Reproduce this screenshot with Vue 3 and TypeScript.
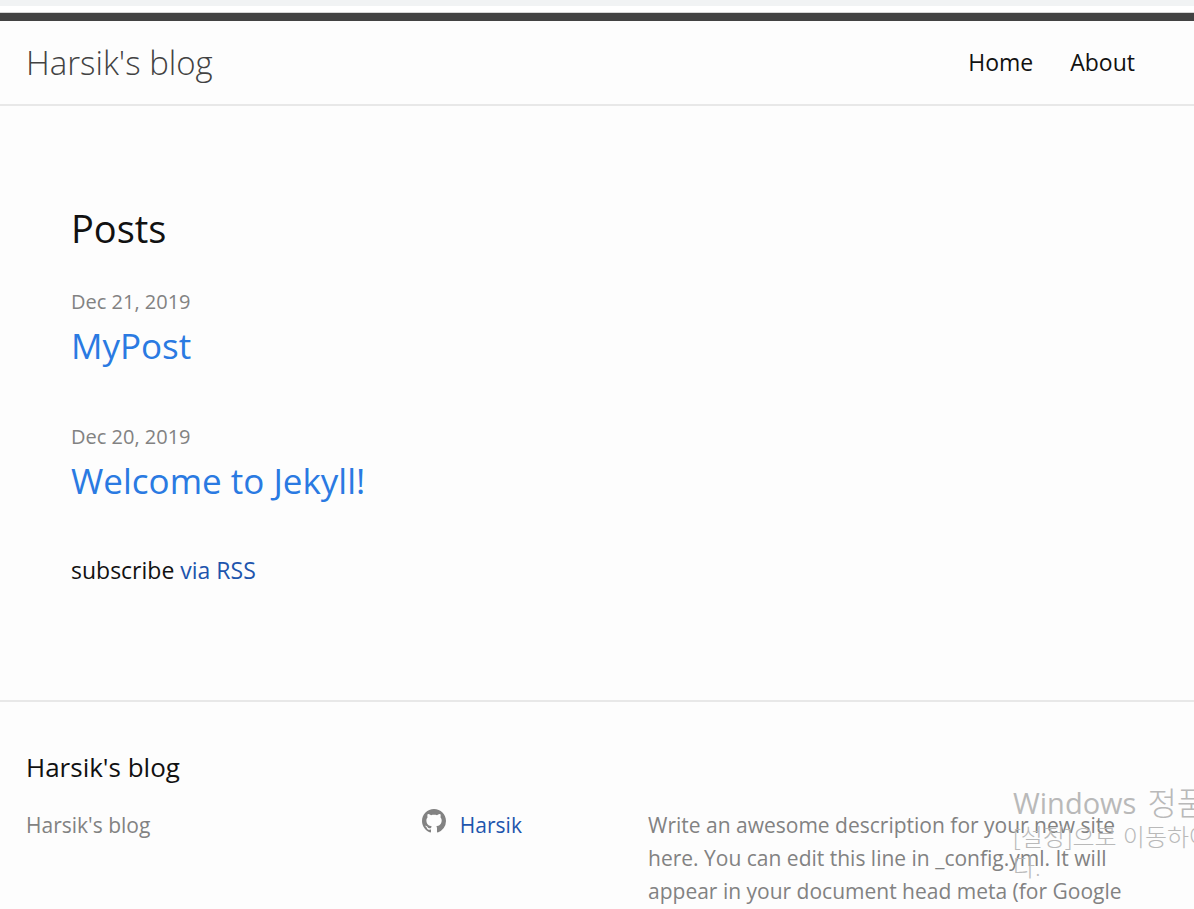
<script setup lang="ts">
interface Post {
  date: string
  iso: string
  title: string
}

const siteTitle = "Harsik's blog"
const navLinks: string[] = ['Home', 'About']
const posts: Post[] = [
  { date: 'Dec 21, 2019', iso: '2019-12-21', title: 'MyPost' },
  { date: 'Dec 20, 2019', iso: '2019-12-20', title: 'Welcome to Jekyll!' },
]
const description =
  'Write an awesome description for your new site here. You can edit this line in _config.yml. It will appear in your document head meta (for Google'
</script>

<template>
  <div class="page">
    <div class="browser-edge"></div>
    <header class="site-header">
      <a class="site-title" href="#">{{ siteTitle }}</a>
      <nav class="site-nav">
        <a v-for="link in navLinks" :key="link" href="#">{{ link }}</a>
      </nav>
    </header>

    <main class="content">
      <h1 class="heading">Posts</h1>
      <ul class="post-list">
        <li v-for="post in posts" :key="post.iso">
          <time class="post-date" :datetime="post.iso">{{ post.date }}</time>
          <h2 class="post-title"><a href="#">{{ post.title }}</a></h2>
        </li>
      </ul>
      <p class="subscribe">subscribe <a href="#">via RSS</a></p>
    </main>

    <footer class="site-footer">
      <h2 class="footer-heading">{{ siteTitle }}</h2>
      <div class="footer-columns">
        <p>{{ siteTitle }}</p>
        <a class="github" href="#">
          <svg viewBox="0 0 16 16" aria-hidden="true">
            <path
              d="M8 0C3.58 0 0 3.58 0 8c0 3.54 2.29 6.53 5.47 7.59.4.07.55-.17.55-.38 0-.19-.01-.82-.01-1.49-2.01.37-2.53-.49-2.69-.94-.09-.23-.48-.94-.82-1.13-.28-.15-.68-.52-.01-.53.63-.01 1.08.58 1.23.82.72 1.21 1.87.87 2.33.66.07-.52.28-.87.51-1.07-1.78-.2-3.64-.89-3.64-3.95 0-.87.31-1.59.82-2.15-.08-.2-.36-1.02.08-2.12 0 0 .67-.21 2.2.82.64-.18 1.32-.27 2-.27s1.36.09 2 .27c1.53-1.04 2.2-.82 2.2-.82.44 1.1.16 1.92.08 2.12.51.56.82 1.27.82 2.15 0 3.07-1.87 3.75-3.65 3.95.29.25.54.73.54 1.48 0 1.07-.01 1.93-.01 2.2 0 .21.15.46.55.38A8.01 8.01 0 0 0 16 8c0-4.42-3.58-8-8-8z"
            />
          </svg>
          <span>Harsik</span>
        </a>
        <p class="description">{{ description }}</p>
      </div>
    </footer>

    <div class="watermark">
      <div class="watermark-title">
        <span>Windows</span>
        <span class="hangul">정품</span>
      </div>
      <div>[설정]으로 이동하여</div>
      <div>다.</div>
    </div>
  </div>
</template>

<style>
body {
  margin: 0;
  background: #fdfdfd;
}
</style>

<style scoped>
.page {
  position: relative;
  overflow: hidden;
  color: #111;
  font-family: 'Open Sans', 'Noto Sans', 'Noto Sans CJK KR', sans-serif;
  font-size: 23px;
  line-height: 33px;
}

h1,
h2,
p,
ul {
  margin: 0;
  padding: 0;
  font-weight: 400;
}

a {
  color: #1d55ad;
  text-decoration: none;
}

.browser-edge {
  height: 6px;
  border-top: 6px solid #f1f3f4;
  border-bottom: 1px solid #d5d5d5;
  background: #fff;
}

.site-header {
  display: flex;
  justify-content: space-between;
  align-items: center;
  height: 83px;
  padding: 0 59px 0 26px;
  border-top: 8px solid #424242;
  border-bottom: 2px solid #e8e8e8;
}

.site-title {
  color: #424242;
  font-size: 33px;
  font-weight: 300;
}

.site-nav {
  display: flex;
  gap: 37px;
}

.site-nav a {
  color: #111;
}

.content {
  padding: 91px 71px 113px;
}

.heading {
  margin-bottom: 26px;
  font-size: 38px;
  line-height: 63px;
}

.post-list {
  list-style: none;
}

.post-list li + li {
  margin-top: 47px;
}

.post-date {
  display: block;
  color: #828282;
  font-size: 20px;
  line-height: 32px;
}

.post-title {
  font-size: 35px;
  line-height: 56px;
}

.post-title a {
  color: #2a7ae2;
}

.subscribe {
  margin-top: 45px;
}

.site-footer {
  padding: 46px 37px 0 26px;
  border-top: 2px solid #e8e8e8;
}

.footer-heading {
  margin-bottom: 22px;
  font-size: 26px;
  line-height: 39px;
}

.footer-columns {
  display: grid;
  grid-template-columns: 35fr 20fr 45fr;
  color: #828282;
  font-size: 21px;
}

.github {
  display: flex;
  gap: 14px;
}

.github svg {
  width: 24px;
  height: 24px;
  fill: #828282;
}

.description {
  padding-right: 22px;
}

.watermark {
  position: absolute;
  top: 783px;
  left: 1013px;
  color: #b9b9b9;
  font-family: 'Open Sans', 'Noto Sans CJK KR', sans-serif;
  font-size: 24px;
  font-weight: 300;
  line-height: 30px;
  white-space: nowrap;
  pointer-events: none;
}

.watermark-title {
  display: flex;
  gap: 11px;
  font-size: 29px;
  font-weight: 400;
  line-height: 39px;
}

.hangul {
  font-size: 32px;
  font-weight: 300;
}
</style>
